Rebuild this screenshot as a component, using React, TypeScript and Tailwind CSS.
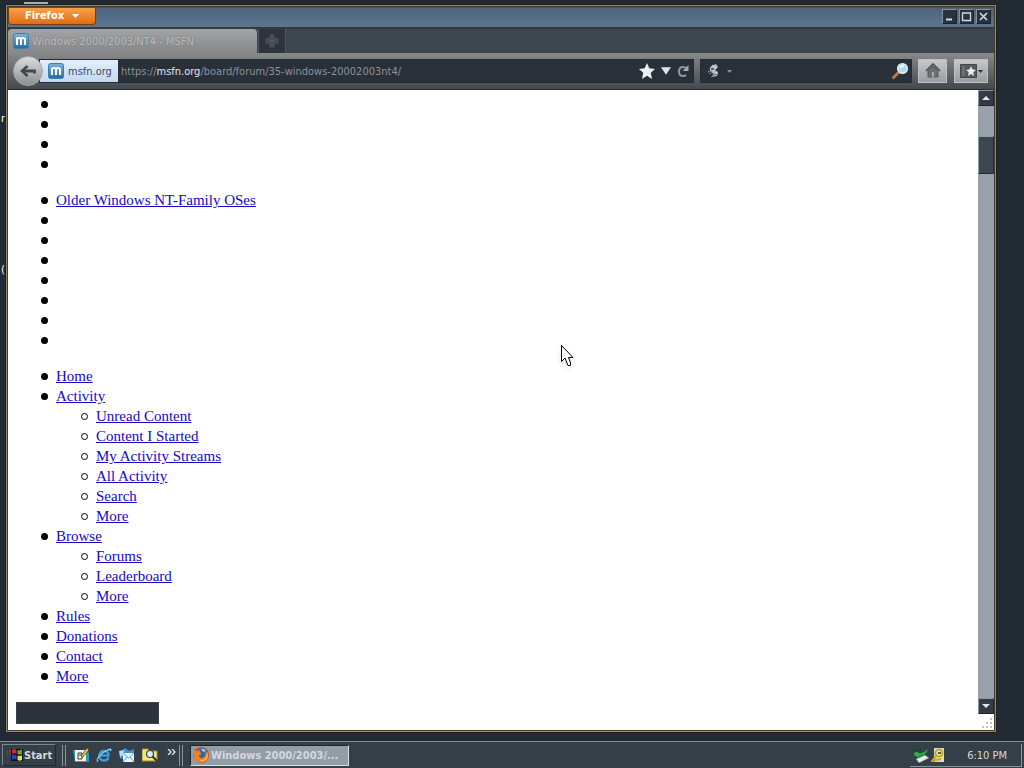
import React from 'react';

interface LinkItem {
    label: string;
    children?: string[];
}

const menuItems: LinkItem[] = [
    { label: 'Home' },
    {
        label: 'Activity',
        children: ['Unread Content', 'Content I Started', 'My Activity Streams', 'All Activity', 'Search', 'More']
    },
    { label: 'Browse', children: ['Forums', 'Leaderboard', 'More'] },
    { label: 'Rules' },
    { label: 'Donations' },
    { label: 'Contact' },
    { label: 'More' }
];

const discItem =
    "before:content-[''] before:inline-block before:w-[7px] before:h-[7px] before:-ml-[15px] before:mr-2 before:rounded-full before:bg-black before:align-[1px]";
const circleItem =
    "before:content-[''] before:inline-block before:w-[7px] before:h-[7px] before:-ml-[15px] before:mr-2 before:rounded-full before:border before:border-black before:align-[1px]";

function SiteIcon() {
    return (
        <svg className="w-4 h-4 shrink-0" viewBox="0 0 16 16" aria-hidden="true">
            <defs>
                <linearGradient id="site" x1="0" y1="0" x2="0" y2="1">
                    <stop offset="0" stopColor="#7fb4d8" />
                    <stop offset="1" stopColor="#1f6da3" />
                </linearGradient>
            </defs>
            <rect x="0.5" y="0.5" width="15" height="15" rx="2" fill="url(#site)" stroke="#3d7fae" />
            <path d="M4 12V4.5M4 6Q4 5 6 5T8 6.5V12M8 6.5Q8 5 10 5T12 6.5V12" fill="none" stroke="#fff" strokeWidth="2" />
        </svg>
    );
}

function FirefoxIcon() {
    return (
        <svg className="w-4 h-4 shrink-0" viewBox="0 0 16 16" aria-hidden="true">
            <circle cx="8" cy="8" r="8" fill="#d9541a" />
            <circle cx="9" cy="6.5" r="5.5" fill="#2a66a8" />
            <path d="M8 2Q11 1 13 4L11 5L9 4Z" fill="#8fd0ee" />
            <path d="M1 3Q3 5 5 4Q6 3 7 3Q6 5 8 6Q9 7 7 8Q5 9 7 10.500Q10 12 12 9Q13 7 12 4Q16 7 14.500 11Q12 16 7 15.500Q1 15 0.500 9Q0 6 1 3Z" fill="#f0802a" />
            <path d="M14 5Q15 9 12 12Q9 14 6 13Q10 16 14 12Q16 8 14 5Z" fill="#fbc04a" />
        </svg>
    );
}

function TitleBar() {
    const box = 'w-[15px] h-[15px] bg-[#29333d] border border-[#8593a0] border-r-[#1b222a] border-b-[#1b222a] flex items-center justify-center';
    return (
        <header className="h-5 flex items-start justify-between bg-linear-to-b from-[#4d647e] to-[#5c7590] border-t border-[#43556a]">
            <button className="w-[88px] h-[17px] flex items-center justify-center gap-2 rounded-b-sm border border-t-0 border-[#7c3c12] bg-linear-to-b from-[#f7a24b] to-[#e06c0e] text-white text-[11px] leading-3 font-bold">
                Firefox
                <svg className="w-[7px] h-1" viewBox="0 0 7 4" aria-hidden="true"><path d="M0 0H7L3.500 4Z" fill="#fff" /></svg>
            </button>
            <div className="flex gap-[2px] pr-[3px] pt-px">
                <button aria-label="Minimize" className={box}>
                    <svg className="w-[13px] h-[13px]" viewBox="0 0 13 13"><path d="M3 9.500H9" stroke="#d4dae0" strokeWidth="2" /></svg>
                </button>
                <button aria-label="Maximize" className={box}>
                    <svg className="w-[13px] h-[13px]" viewBox="0 0 13 13"><path d="M2.500 3V10.500H10.500V3M2 3H11" fill="none" stroke="#d4dae0" strokeWidth="1.300" /></svg>
                </button>
                <button aria-label="Close" className={box}>
                    <svg className="w-[13px] h-[13px]" viewBox="0 0 13 13"><path d="M3 3L10 10M10 3L3 10" stroke="#d4dae0" strokeWidth="1.600" /></svg>
                </button>
            </div>
        </header>
    );
}

function TabStrip() {
    return (
        <div className="h-[26px] flex items-stretch bg-[#3d464e] border-t-2 border-[#353a41]" role="tablist">
            <button role="tab" aria-selected="true" className="w-[249px] flex items-center gap-[3px] pl-[5px] rounded-t-sm bg-linear-to-b from-[#a2a4a6] to-[#858789] text-[#b9bbbd]">
                <SiteIcon />
                <span className="pt-px whitespace-nowrap [text-shadow:0_0_2px_#77797b]">Windows 2000/2003/NT4 - MSFN</span>
            </button>
            <button aria-label="New tab" className="w-7 ml-px flex items-center justify-center bg-[#2d343d] border-x border-[#4f565e]">
                <svg className="w-4 h-4" viewBox="0 0 16 16"><path d="M6 2H10V6H14V10H10V14H6V10H2V6H6Z" fill="#3b434b" stroke="#525a61" /><path d="M8 4V12M4 8H12" stroke="#5d656c" /></svg>
            </button>
        </div>
    );
}

function Toolbar() {
    return (
        <div className="h-[37px] flex items-center pl-[5px] pr-1.5 bg-linear-to-b from-[#88898b] via-[#66696c] to-[#42494f] border-b border-[#252b31]">
            <button aria-label="Back" className="w-[30px] h-[30px] shrink-0 z-10 rounded-full bg-linear-to-b from-[#dedede] to-[#8c8e90] border border-[#a5a7a9] flex items-center justify-center">
                <svg className="w-5 h-5" viewBox="0 0 20 20"><path d="M9.500 5L4 10L9.500 15" fill="none" stroke="#454749" strokeWidth="2.600" /><path d="M4.500 10H16.500V12.500" fill="none" stroke="#454749" strokeWidth="2.800" /></svg>
            </button>
            <div className="flex-1 h-6 -ml-1 flex items-center bg-[#29303a] border border-[#252b32]">
                <div className="h-[22px] w-[78px] shrink-0 flex items-center gap-1 pl-2 bg-linear-to-b from-[#e3effd] to-[#c3d8f1] text-[#3a4a66]">
                    <SiteIcon />
                    <span className="pt-[2px]">msfn.org</span>
                </div>
                <div className="flex-1 pl-[3px] pt-[2px] text-[#8d9298] whitespace-nowrap">
                    https://<span className="text-[#e4e7ea]">msfn.org</span>/board/forum/35-windows-20002003nt4/
                </div>
                <div className="flex items-center gap-1.5 pr-1">
                    <button aria-label="Bookmark this page">
                        <svg className="w-4 h-4 block" viewBox="0 0 16 16"><path d="M8 0L10.300 5.300L16 6L11.800 9.800L13 16L8 12.700L3 16L4.200 9.800L0 6L5.700 5.300Z" fill="#eceef1" /></svg>
                    </button>
                    <button aria-label="Show history">
                        <svg className="w-[10px] h-2 block" viewBox="0 0 11 8"><path d="M0 0H11L5.500 8Z" fill="#dfe3e8" /></svg>
                    </button>
                    <button aria-label="Reload">
                        <svg className="w-3 h-[14px] block" viewBox="0 0 12 14"><path d="M9 4.500Q8 3 6 3Q2 3 2 7.500Q2 12 6 12Q8 12 9 11" fill="none" stroke="#9298a0" strokeWidth="2" /><path d="M11.500 1V7H5.500Z" fill="#a3a9b0" /></svg>
                    </button>
                </div>
            </div>
            <form className="w-[212px] h-6 ml-1.5 flex items-center gap-1 px-1.5 bg-[#29303a] border border-[#252b32]" onSubmit={(e) => e.preventDefault()}>
                <button type="button" aria-label="Search engine" className="flex items-center gap-1.5">
                    <svg className="w-[14px] h-[14px]" viewBox="0 0 14 14"><path d="M4 2L9 0L11 3L8 6L11 8L10 12L4 13L7 10L3 8Z" fill="#a7b8c5" /><path d="M3 4L7 3L8 6L4 7ZM8 8L11 10M5 1L10 4" fill="#35678e" stroke="#e8ebec" strokeWidth="0.700" /><path d="M1 7L5 8L3 10ZM6 11L10 10" fill="#111" stroke="#8a7a50" /></svg>
                    <svg className="w-[5px] h-[3px]" viewBox="0 0 5 3"><path d="M0 0H5L2.500 3Z" fill="#8b929b" /></svg>
                </button>
                <input aria-label="Web search" className="flex-1 min-w-0 bg-transparent outline-none text-[#c6cbd1]" />
                <button aria-label="Go" className="-mr-1">
                    <svg className="w-[18px] h-[18px] block" viewBox="0 0 18 18"><path d="M7 11L2.500 15.500" stroke="#b77b4b" strokeWidth="3" strokeLinecap="round" /><circle cx="11.500" cy="6.500" r="4.800" fill="#b5d7f8" stroke="#e4eff8" strokeWidth="1.500" /><path d="M9 6Q10 3.500 13 4" fill="none" stroke="#fff" strokeWidth="1.500" /></svg>
                </button>
            </form>
            <button aria-label="Home page" className="w-[29px] h-6 ml-1.5 flex items-center justify-center bg-linear-to-b from-[#c7c8ca] to-[#9b9da0] border border-[#bfc1c3]">
                <svg className="w-4 h-4" viewBox="0 0 16 16"><path d="M1 8L8 1L15 8" fill="none" stroke="#4b4e51" strokeWidth="1.700" /><path d="M3 8L8 3L13 8V14H3Z" fill="#6c7073" stroke="#54585b" /><path d="M7 9H9V14H7Z" fill="#a6a8aa" /></svg>
            </button>
            <button aria-label="Bookmarks" className="w-[34px] h-6 ml-[7px] flex items-center justify-center gap-px bg-linear-to-b from-[#c7c8ca] to-[#9b9da0] border border-[#bfc1c3]">
                <svg className="w-[17px] h-[14px]" viewBox="0 0 17 14"><path d="M0.500 0.500H16.500V13.500H0.500Z" fill="#55595d" stroke="#44484c" /><path d="M2 3H5M2 5H5M2 7H5M2 9H5M2 11H5" stroke="#868a8d" /><path d="M11 2L12.400 5.300L16 6L13.300 8.300L14 12L11 10L8 12L8.700 8.300L6 6L9.600 5.300Z" fill="#e9eaeb" /></svg>
                <svg className="w-[5px] h-[3px]" viewBox="0 0 5 3"><path d="M0 0H5L2.500 3Z" fill="#303336" /></svg>
            </button>
        </div>
    );
}

function PageLink({ label }: { label: string }) {
    return <a href="#" className="text-[#1408c4] underline">{label}</a>;
}

function Bullets({ count }: { count: number }) {
    return (
        <>
            {Array.from({ length: count }, (_, i) => (
                <li key={i} className={`h-5 ${discItem}`} />
            ))}
        </>
    );
}

function PageContent() {
    return (
        <main className="flex-1 min-w-0 overflow-hidden px-2 pt-1 text-[15px] leading-5 text-black font-['Liberation_Serif',serif]">
            <ul className="pl-10 mb-4">
                <Bullets count={4} />
            </ul>
            <ul className="pl-10 mb-4">
                <li className={discItem}><PageLink label="Older Windows NT-Family OSes" /></li>
                <Bullets count={7} />
            </ul>
            <ul className="pl-10 mb-4">
                {menuItems.map((item) => (
                    <li key={item.label} className={discItem}>
                        <PageLink label={item.label} />
                        {item.children && (
                            <ul className="pl-10">
                                {item.children.map((child) => (
                                    <li key={child} className={circleItem}><PageLink label={child} /></li>
                                ))}
                            </ul>
                        )}
                    </li>
                ))}
            </ul>
            <input aria-label="Search" className="block w-[143px] h-[22px] px-1 bg-[#2d333d] border border-[#3c424b] text-white" />
        </main>
    );
}

function Scrollbar() {
    const arrow = 'h-4 shrink-0 flex items-center justify-center bg-[#333c45] border border-[#8b96a0] border-r-[#1d242b] border-b-[#1d242b]';
    return (
        <div className="w-4 flex flex-col bg-[#98a1a9]">
            <div className="flex-1 flex flex-col">
                <button aria-label="Scroll up" className={arrow}>
                    <svg className="w-2 h-1" viewBox="0 0 8 4"><path d="M0 4H8L4 0Z" fill="#e3e7ea" /></svg>
                </button>
                <div className="h-[38px] mt-[30px] bg-[#3d474f] border border-[#929ca5] border-r-[#252c33] border-b-[#252c33]" />
                <button aria-label="Scroll down" className={`mt-auto ${arrow}`}>
                    <svg className="w-2 h-1" viewBox="0 0 8 4"><path d="M0 0H8L4 4Z" fill="#e3e7ea" /></svg>
                </button>
            </div>
            <div className="h-4 flex items-end justify-end bg-white">
                <svg className="w-3 h-3" viewBox="0 0 12 12" aria-hidden="true">
                    <path d="M8 0h2v2h-2zM4 4h2v2h-2zM8 4h2v2h-2zM0 8h2v2h-2zM4 8h2v2h-2zM8 8h2v2h-2z" fill="#c6c2c5" />
                </svg>
            </div>
        </div>
    );
}

function QuickLaunch() {
    return (
        <div className="flex items-center gap-[7px]">
            <button aria-label="Show desktop">
                <svg className="w-4 h-4 block" viewBox="0 0 16 16"><path d="M0 3H12L16 6V15H2Z" fill="#2f9bb4" /><path d="M2 3H13V14H2Z" fill="#f4f2df" /><path d="M5 6H9V12H5ZM6 8H10" fill="none" stroke="#3b3b35" /><path d="M8 9L14 1L16 3L10 10Z" fill="#e5bd55" stroke="#58431f" strokeWidth="0.700" /></svg>
            </button>
            <button aria-label="Internet Explorer">
                <svg className="w-4 h-4 block" viewBox="0 0 16 16"><path d="M12.500 10.500Q11 14 7.500 13.500Q3 13 3.500 8.500Q4 4 8 4Q13 4 12.500 8.500H4" fill="none" stroke="#3a9be0" strokeWidth="2.500" /><path d="M1 15Q-1 11 7 5Q14 0 15.500 2Q16 3 14.500 5Q15 2 11 4Q4 8 2 12Q1 14 3 14Z" fill="#8bcaf4" /></svg>
            </button>
            <button aria-label="Outlook Express">
                <svg className="w-4 h-4 block" viewBox="0 0 16 16"><path d="M1 5L6 1L10 4L15 2V7L11 9L1 12Z" fill="#3b91dc" /><path d="M4 6H15V15H4Z" fill="#e9f4fd" /><path d="M4 6L9.500 11L15 6M4 15L8 10M15 15L11 10" fill="none" stroke="#5c9fd2" /><path d="M0 4L5 3L4 8L1 10Z" fill="#b5dcfa" /></svg>
            </button>
            <button aria-label="Search files">
                <svg className="w-4 h-4 block" viewBox="0 0 16 16"><path d="M0 2H6L8 4H15V14H0Z" fill="#f2e678" stroke="#a78f35" /><circle cx="8" cy="7" r="3.500" fill="#d4edf2" stroke="#3b4348" strokeWidth="1.200" /><path d="M10.500 9.500L15 14" stroke="#2b2f37" strokeWidth="2" /></svg>
            </button>
        </div>
    );
}

function Divider() {
    return (
        <div className="flex gap-[2px] h-[21px]">
            <span className="w-px bg-[#8a949c]" />
            <span className="w-px bg-[#8a949c]" />
        </div>
    );
}

function Taskbar() {
    return (
        <footer className="h-[27px] shrink-0 flex items-center bg-[#353f48] border-t border-[#85909a] px-[2px] text-[#d3d9de]">
            <button className="w-[54px] h-[22px] flex items-center gap-px pl-1 border border-[#7a858e] border-r-[#20272e] border-b-[#20272e] font-bold">
                <svg className="w-4 h-[14px] shrink-0" viewBox="0 0 16 14" aria-hidden="true">
                    <path d="M4 1H16V13H4Z" fill="#0b0b0e" />
                    <path d="M5 2Q7 0 9.500 2V6Q7 4.500 5 6Z" fill="#c92d38" /><path d="M10.500 2Q13 3 15 1V6Q13 7.500 10.500 6Z" fill="#5dac30" />
                    <path d="M5 7Q7 6 9.500 7.500V12Q7 10 5 12Z" fill="#2848b8" /><path d="M10.500 7.500Q13 8.500 15 7V12Q13 13.500 10.500 12Z" fill="#ecdd3c" />
                    <path d="M0 4H1M2 3H4M0 7H1M2 6H4" stroke="#b02a3a" strokeWidth="2" /><path d="M0 10H1M2 9H4M0 12H1M2 12H4" stroke="#243a9c" strokeWidth="2" />
                </svg>
                <span className="pt-px">Start</span>
            </button>
            <div className="ml-1.5"><Divider /></div>
            <div className="ml-[7px]"><QuickLaunch /></div>
            <button aria-label="More shortcuts" className="ml-[9px] mb-1.5">
                <svg className="w-[9px] h-[6px] block" viewBox="0 0 9 6"><path d="M1 0L4 3L1 6M5 0L8 3L5 6" fill="none" stroke="#e4e8ec" strokeWidth="1.300" /></svg>
            </button>
            <div className="ml-[3px]"><Divider /></div>
            <button className="w-[159px] h-[21px] ml-[7px] flex items-center gap-[2px] pl-[2px] bg-[#939da5] border border-[#1d252c] border-r-[#dce1e5] border-b-[#dce1e5] text-[#d3d9df] font-bold whitespace-nowrap">
                <FirefoxIcon />
                <span className="pt-px">Windows 2000/2003/...</span>
            </button>
            <div className="ml-auto w-[112px] h-[23px] flex items-center pl-[3px] pr-[14px] border-b border-r border-[#8b959e]">
                <svg className="w-4 h-4" viewBox="0 0 16 16" aria-hidden="true"><path d="M1 6L5 4V6Q10 7 15 2Q13 9 6 9V11L1 8Z" fill="#22b637" /><path d="M3 12L12 8L16 11L6 16Z" fill="#e9eeea" stroke="#64736a" strokeWidth="0.600" /><path d="M1 4L8 3" stroke="#1a4429" strokeWidth="2" /></svg>
                <svg className="w-4 h-4 ml-[2px]" viewBox="0 0 16 16" aria-hidden="true"><path d="M3 1H13V15H3Z" fill="#ddd8cf" /><circle cx="8" cy="6" r="3.500" fill="#f2e875" stroke="#b99b17" strokeWidth="1.500" /><path d="M6 8L1 14L5 13L10 12" fill="none" stroke="#c8a923" strokeWidth="2" /><path d="M7 5H10V7H7Z" fill="#5b564e" /></svg>
                <span className="ml-auto pt-[2px] whitespace-nowrap">6:10 PM</span>
            </div>
        </footer>
    );
}

export default function App() {
    return (
        <div className="relative h-screen flex flex-col overflow-hidden bg-[#222a34] text-[11px] leading-4 font-['DejaVu_Sans_Condensed','DejaVu_Sans',sans-serif]">
            {/* Desktop icons that show past the window edges */}
            <span className="absolute left-6 top-[2px] w-6 h-[2px] bg-[#a9adb2]" />
            <span className="absolute left-px top-[111px] w-1 overflow-hidden text-white">r</span>
            <span className="absolute left-px top-[262px] w-1 overflow-hidden text-white">(</span>

            {/* Browser window */}
            <div className="flex-1 min-h-0 flex flex-col ml-1.5 mr-7 mt-[5px] mb-[9px] border border-[#8e8867] border-r-[#99904a] border-b-[#ab9448] outline outline-[#191f24]">
                <div className="flex-1 min-h-0 flex flex-col border border-[#493c24]">
                    <TitleBar />
                    <TabStrip />
                    <Toolbar />
                    <div className="flex-1 min-h-0 flex bg-white">
                        <PageContent />
                        <Scrollbar />
                    </div>
                </div>
            </div>

            <Taskbar />

            {/* Mouse pointer */}
            <svg className="absolute left-[561px] top-[345px] w-[13px] h-[22px] drop-shadow-md pointer-events-none" viewBox="0 0 13 22" aria-hidden="true">
                <path d="M0.500 0.500V16.500L4 13L7 20.500H9.500V18L7.500 12.500H12Z" fill="#fff" stroke="#000" />
            </svg>
        </div>
    );
}
